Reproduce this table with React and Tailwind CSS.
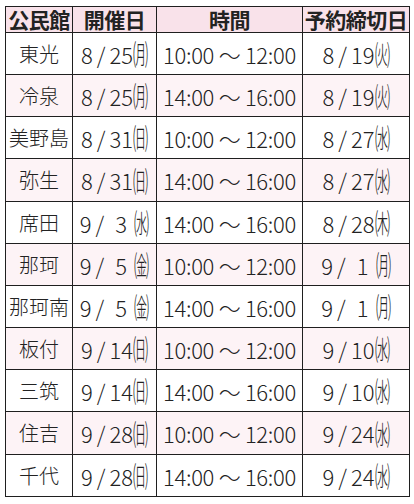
import React from 'react';

const rows = [
  { hall: '東光', m: '8', d: '25', w: '㈪', time: '10:00 〜 12:00', dm: '8', dd: '19', dw: '㈫' },
  { hall: '冷泉', m: '8', d: '25', w: '㈪', time: '14:00 〜 16:00', dm: '8', dd: '19', dw: '㈫' },
  { hall: '美野島', m: '8', d: '31', w: '㈰', time: '10:00 〜 12:00', dm: '8', dd: '27', dw: '㈬' },
  { hall: '弥生', m: '8', d: '31', w: '㈰', time: '14:00 〜 16:00', dm: '8', dd: '27', dw: '㈬', tall: true },
  { hall: '席田', m: '9', d: '3', w: '㈬', time: '14:00 〜 16:00', dm: '8', dd: '28', dw: '㈭' },
  { hall: '那珂', m: '9', d: '5', w: '㈮', time: '10:00 〜 12:00', dm: '9', dd: '1', dw: '㈪' },
  { hall: '那珂南', m: '9', d: '5', w: '㈮', time: '14:00 〜 16:00', dm: '9', dd: '1', dw: '㈪' },
  { hall: '板付', m: '9', d: '14', w: '㈰', time: '10:00 〜 12:00', dm: '9', dd: '10', dw: '㈬' },
  { hall: '三筑', m: '9', d: '14', w: '㈰', time: '14:00 〜 16:00', dm: '9', dd: '10', dw: '㈬' },
  { hall: '住吉', m: '9', d: '28', w: '㈰', time: '10:00 〜 12:00', dm: '9', dd: '24', dw: '㈬', tall: true },
  { hall: '千代', m: '9', d: '28', w: '㈰', time: '14:00 〜 16:00', dm: '9', dd: '24', dw: '㈬' },
];

// 8 / 25(月) style date, single digit days get centred in a two digit slot
const DateText = ({ m, d, w }) => (
  <span className="inline-flex items-center">
    <span>{m}</span>
    <span className="mx-[4px] font-extralight">/</span>
    {d.length === 1 ? <span className="inline-block w-[26px] text-center">{d}</span> : <span>{d}</span>}
    <span className="inline-flex h-[22px] w-[15px] items-center overflow-visible">
      <span className="inline-block origin-left scale-x-[0.52] text-[29px] leading-none">{w}</span>
    </span>
  </span>
);

const cols = 'grid grid-cols-[67px_84px_146px_107px]';
const cell = 'flex items-center justify-center border-r border-[#1f1f1f]';

export default function App() {
  return (
    <div className="min-h-[504px] w-[414px] bg-white pt-[6px] pl-[5px] text-[#222] font-['Noto_Sans_CJK_JP','Noto_Sans',sans-serif]">
      <div className="w-[405px] border-l border-t border-[#1f1f1f]">
        {/* header */}
        <div className={`${cols} h-[26px] border-b border-[#1f1f1f] bg-[#f9e2ea] text-[21px] font-bold leading-none tracking-[-0.5px]`}>
          <div className={cell}>公民館</div>
          <div className={cell}>開催日</div>
          <div className={cell}>時間</div>
          <div className={cell}>予約締切日</div>
        </div>

        {rows.map((r, i) => (
          <div
            key={r.hall}
            className={`${cols} ${r.tall ? 'h-[43px]' : 'h-[42px]'} border-b border-[#1f1f1f] ${i % 2 === 1 ? 'bg-[#fdf3f6]' : 'bg-white'} font-light leading-none`}
          >
            <div className={`${cell} text-[20px]`}>{r.hall}</div>
            <div className={`${cell} text-[22px]`}>
              <DateText m={r.m} d={r.d} w={r.w} />
            </div>
            <div className={`${cell} text-[22px] tracking-[-0.3px]`}>{r.time}</div>
            <div className={`${cell} text-[22px]`}>
              <DateText m={r.dm} d={r.dd} w={r.dw} />
            </div>
          </div>
        ))}
      </div>
    </div>
  );
}
